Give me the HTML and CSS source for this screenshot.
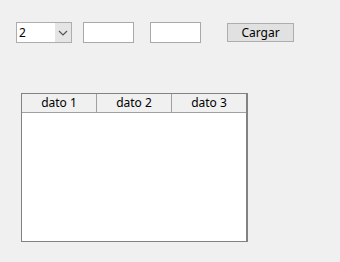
FILE: index.html
```html
<!DOCTYPE html>
<html lang="es">
<head>
  <meta charset="UTF-8">
  <title>Cargar datos</title>
  <link rel="stylesheet" href="styles.css">
</head>
<body>
  <div class="form">
    <div class="toolbar">
      <div class="combo">
        <span class="combo-value">2</span>
        <span class="combo-arrow">
          <svg width="10" height="6" viewBox="0 0 10 6"><path d="M1 1 L5 5 L9 1" fill="none" stroke="#555" stroke-width="1.2"/></svg>
        </span>
      </div>
      <input type="text" class="txt txt-1">
      <input type="text" class="txt txt-2">
      <button class="btn">Cargar</button>
    </div>

    <div class="grid">
      <div class="grid-header">
        <div class="col">dato 1</div>
        <div class="col">dato 2</div>
        <div class="col">dato 3</div>
      </div>
      <div class="grid-body"></div>
    </div>
  </div>
</body>
</html>
```

FILE: styles.css
```css
* {
  margin: 0;
  padding: 0;
  box-sizing: border-box;
  font-family: 'Noto Sans', 'Liberation Sans', sans-serif;
}

body {
  background-color: #f0f0f0;
  width: 340px;
  height: 262px;
  overflow: hidden;
}

.form {
  padding: 22px 0 0 16px;
}

.toolbar {
  display: flex;
  align-items: flex-start;
}

.combo {
  width: 56px;
  height: 21px;
  border: 1px solid #adadad;
  background-color: #fff;
  display: flex;
}

.combo-value {
  flex: 1;
  font-size: 12px;
  line-height: 19px;
  padding-left: 2px;
  color: #000;
}

.combo-arrow {
  width: 16px;
  background-color: #e5e5e5;
  display: flex;
  align-items: center;
  justify-content: center;
}

.txt {
  width: 51px;
  height: 21px;
  border: 1px solid #a9a9a9;
  background-color: #fff;
  outline: none;
}

.txt-1 {
  margin-left: 11px;
}

.txt-2 {
  margin-left: 16px;
}

.btn {
  width: 67px;
  height: 19px;
  margin-top: 1px;
  margin-left: 26px;
  border: 1px solid #adadad;
  background-color: #e1e1e1;
  font-size: 12px;
  color: #000;
}

.grid {
  margin-top: 50px;
  margin-left: 5px;
  width: 227px;
  height: 149px;
  border: 1px solid #828282;
  border-right-width: 2px;
  background-color: #fff;
  display: flex;
  flex-direction: column;
}

.grid-header {
  display: flex;
  height: 19px;
  background-color: #f0f0f0;
  border-bottom: 1px solid #a0a0a0;
}

.col {
  width: 75px;
  font-size: 12px;
  line-height: 18px;
  text-align: center;
  color: #000;
  border-right: 1px solid #a0a0a0;
}

.col:last-child {
  flex: 1;
  border-right: none;
}

.grid-body {
  flex: 1;
}
```
